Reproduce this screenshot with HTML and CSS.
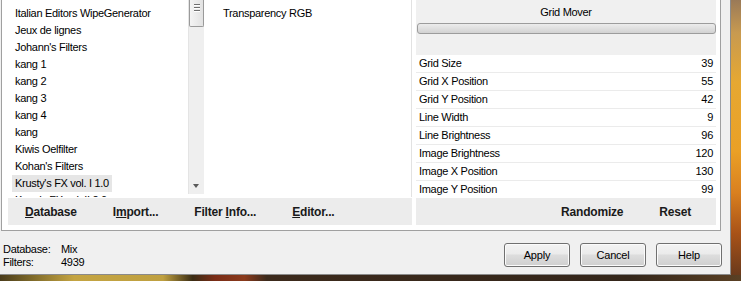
FILE: index.html
```html
<!DOCTYPE html>
<html>
<head>
    <title>Filters Unlimited - Grid Mover</title>
    <meta name="viewport" content="width=device-width, initial-scale=1.0">
    <link rel="stylesheet" href="styles.css">
</head>
<body>
    <div class="screen">
        <div class="dialog">
            <!-- main group box -->
            <div class="group">
                <div class="panes">
                    <!-- categories -->
                    <ul class="list cat-list">
                        <li>Italian Editors WipeGenerator</li>
                        <li>Jeux de lignes</li>
                        <li>Johann's Filters</li>
                        <li>kang 1</li>
                        <li>kang 2</li>
                        <li>kang 3</li>
                        <li>kang 4</li>
                        <li>kang</li>
                        <li>Kiwis Oelfilter</li>
                        <li>Kohan's Filters</li>
                        <li class="selected">Krusty's FX vol. I 1.0</li>
                        <li>Kang's FX vol. II 2.0</li>
                    </ul>
                    <div class="scrollbar">
                        <div class="thumb"><span></span><span></span><span></span></div>
                        <div class="arrow-down"></div>
                    </div>

                    <!-- filters -->
                    <ul class="list filter-list">
                        <li>Transparency RGB</li>
                    </ul>

                    <!-- parameters -->
                    <div class="params">
                        <div class="params-title">Grid Mover</div>
                        <div class="slider"></div>
                        <div class="rows">
                            <div class="row"><span>Grid Size</span><span>39</span></div>
                            <div class="row"><span>Grid X Position</span><span>55</span></div>
                            <div class="row"><span>Grid Y Position</span><span>42</span></div>
                            <div class="row"><span>Line Width</span><span>9</span></div>
                            <div class="row"><span>Line Brightness</span><span>96</span></div>
                            <div class="row"><span>Image Brightness</span><span>120</span></div>
                            <div class="row"><span>Image X Position</span><span>130</span></div>
                            <div class="row"><span>Image Y Position</span><span>99</span></div>
                        </div>
                    </div>
                </div>

                <div class="bands">
                    <div class="band band-left">
                        <span class="flat-btn"><u>D</u>atabase</span>
                        <span class="flat-btn">I<u>m</u>port...</span>
                        <span class="flat-btn">Filter <u>I</u>nfo...</span>
                        <span class="flat-btn"><u>E</u>ditor...</span>
                    </div>
                    <div class="band band-right">
                        <span class="flat-btn">Randomize</span>
                        <span class="flat-btn">Reset</span>
                    </div>
                </div>
            </div>

            <!-- status + dialog buttons -->
            <div class="footer">
                <div class="status">
                    <div><span class="key">Database:</span>Mix</div>
                    <div><span class="key">Filters:</span>4939</div>
                </div>
                <div class="actions">
                    <button>Apply</button>
                    <button>Cancel</button>
                    <button>Help</button>
                </div>
            </div>
        </div>
        <div class="desk-right"></div>
        <div class="desk-bottom"></div>
    </div>
</body>
</html>
```

FILE: styles.css
```css
/* base */
body {
    margin: 0;
    font-family: "Liberation Sans", Arial, sans-serif;
    font-size: 11px;
    letter-spacing: -0.3px;
    color: #000;
    overflow: hidden;
}
.screen {
    display: grid;
    grid-template-columns: 731px 10px;
    grid-template-rows: 275px 6px;
    width: 741px;
    height: 281px;
}
.dialog {
    background: #f0f0f0;
    border-right: 1px solid #8a8a8a;
    border-bottom: 1px solid #8a8a8a;
    overflow: hidden;
}
.desk-right {
    background: linear-gradient(180deg, #9a7a58 0%, #c89a50 12%, #e6a832 30%, #eaa026 55%, #d98020 70%, #a85218 85%, #6a3a1c 100%);
}
.desk-bottom {
    grid-column: 1 / -1;
    background: linear-gradient(90deg, #4a3c1c 0%, #7a6628 4%, #c4a442 10%, #bfa040 22%, #3a2c14 26%, #7a2c16 29%, #8a3a1c 33%, #3c2a1c 36%, #34261a 85%, #5a4024 100%);
}

/* group box */
.group {
    width: 718px;
    height: 230px;
    margin-left: 1px;
    background: #fff;
    border: 1px solid #a0a0a0;
    border-top: none;
}
.panes {
    display: flex;
    height: 198px;
}

/* lists */
.list {
    list-style: none;
    margin: 0;
    padding: 5px 0 0;
    overflow: hidden;
    background: #fff;
}
.list li {
    height: 17px;
    line-height: 17px;
    white-space: nowrap;
}
.cat-list {
    width: 186px;
    height: 192px;
}
.cat-list li {
    margin-left: 10px;
    padding-left: 3px;
    width: max-content;
    padding-right: 3px;
}
.cat-list li.selected {
    background: #e6e6e6;
}
.filter-list {
    width: 204px;
    height: 192px;
    margin-left: 3px;
    border-right: 1px solid #e2e2e2;
}
.filter-list li {
    padding-left: 16px;
}

/* scrollbar */
.scrollbar {
    position: relative;
    width: 15px;
    height: 194px;
    background: #efefef;
    border-left: 1px solid #e4e4e4;
}
.thumb {
    display: flex;
    flex-direction: column;
    align-items: center;
    gap: 1px;
    box-sizing: border-box;
    width: 15px;
    height: 27px;
    padding-top: 4px;
    background: linear-gradient(90deg, #f4f4f4, #e2e2e2);
    border: 1px solid #9a9a9a;
    border-top: none;
    border-radius: 0 0 2px 2px;
}
.thumb span {
    width: 6px;
    height: 1px;
    background: #707070;
    border-bottom: 1px solid #fff;
}
.arrow-down {
    position: absolute;
    left: 4px;
    bottom: 6px;
    border-left: 3px solid transparent;
    border-right: 3px solid transparent;
    border-top: 4px solid #5a5a5a;
}

/* parameters */
.params {
    width: 300px;
    margin-left: 4px;
    background: #f0f0f0;
}
.params-title {
    height: 22px;
    line-height: 24px;
    text-align: center;
}
.slider {
    box-sizing: border-box;
    height: 11px;
    margin: 1px 0 21px 1px;
    border: 1px solid #9c9c9c;
    border-radius: 3px;
    background: linear-gradient(180deg, #ececec, #d2d2d2);
}
.rows {
    background: #fff;
}
.row {
    display: flex;
    justify-content: space-between;
    height: 17px;
    line-height: 17px;
    padding: 0 3px;
    border-bottom: 1px solid #ebebeb;
}

/* bands with flat buttons */
.bands {
    display: flex;
    gap: 4px;
    margin-left: 6px;
}
.band {
    display: flex;
    align-items: center;
    height: 27px;
    background: #ececec;
}
.band-left {
    width: 387px;
    padding-left: 17px;
    gap: 36px;
}
.band-right {
    width: 275px;
    justify-content: flex-end;
    padding-right: 25px;
    gap: 36px;
}
.flat-btn {
    font-size: 12px;
    font-weight: bold;
    letter-spacing: -0.2px;
    color: #1a1a1a;
}

/* footer */
.footer {
    display: flex;
    justify-content: space-between;
    padding: 12px 8px 0 3px;
}
.status {
    line-height: 13px;
}
.key {
    display: inline-block;
    width: 58px;
}
.actions {
    display: flex;
    gap: 10px;
}
button {
    width: 66px;
    height: 24px;
    font-family: "Liberation Sans", Arial, sans-serif;
    font-size: 11px;
    letter-spacing: -0.2px;
    border: 1px solid #707070;
    border-radius: 3px;
    background: linear-gradient(180deg, #f3f3f3 0%, #ebebeb 45%, #dddddd 50%, #cfcfcf 100%);
    box-shadow: inset 0 0 0 1px #fbfbfb;
    padding: 0;
}
```
